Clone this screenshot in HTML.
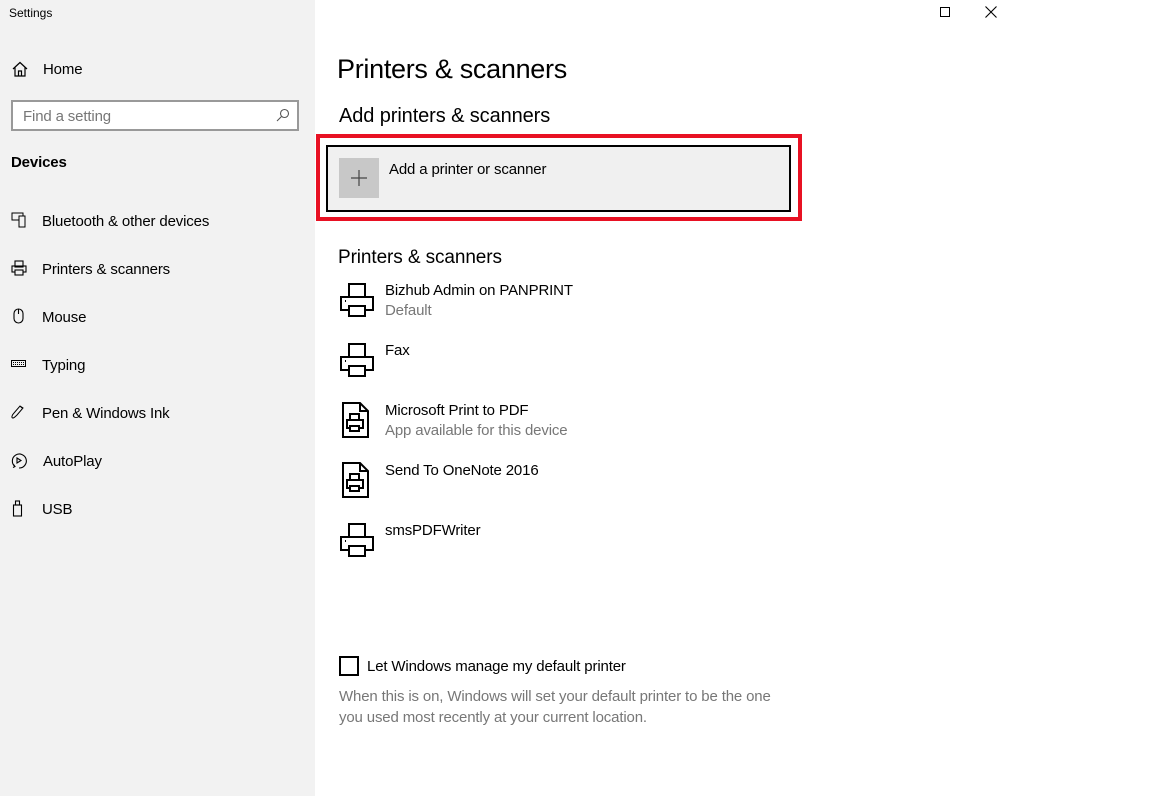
<!DOCTYPE html>
<html><head><meta charset="utf-8"><style>
*{margin:0;padding:0;box-sizing:border-box}
body{width:1152px;height:796px;background:#fff;font-family:"Liberation Sans",sans-serif;color:#000;position:relative;overflow:hidden}
.side{position:absolute;left:0;top:0;width:315px;height:796px;background:#f2f2f2}
.a{position:absolute;white-space:nowrap}
.s15{font-size:15px;letter-spacing:-0.15px}
.g{color:#777}
svg{position:absolute}
</style></head><body>
<div class="side"></div>
<div class="a" style="left:9px;top:6px;font-size:12px">Settings</div>
<svg style="left:12px;top:61px" width="16" height="16" viewBox="0 0 16 16" fill="none" stroke="#000" stroke-width="1.2"><path d="M1 8L8 1.5 15 8M3 6.5V15H13V6.5"/><path d="M6.5 15V10h3v5"/></svg>
<div class="a s15" style="left:43px;top:61px">Home</div>
<div class="a" style="left:11px;top:100px;width:288px;height:31px;border:2px solid #999;background:#fff"></div>
<div class="a s15 g" style="left:23px;top:108px">Find a setting</div>
<svg style="left:276px;top:108px" width="14" height="14" viewBox="0 0 14 14" fill="none" stroke="#555" stroke-width="1.1"><circle cx="8.5" cy="5.5" r="4"/><path d="M5.5 8.5L1 13"/></svg>
<div class="a s15" style="left:11px;top:154px;font-weight:bold">Devices</div>
<svg style="left:11px;top:212px" width="16" height="16" viewBox="0 0 16 16" fill="none" stroke="#000" stroke-width="1"><rect x="1" y="1" width="11" height="7"/><rect x="8" y="4" width="6" height="11" fill="#f2f2f2"/></svg>
<div class="a s15" style="left:42px;top:213px">Bluetooth &amp; other devices</div>
<svg style="left:11px;top:260px" width="16" height="16" viewBox="0 0 16 16" fill="none" stroke="#000" stroke-width="1.1"><rect x="4" y="1" width="8" height="6"/><rect x="1" y="6" width="14" height="6"/><rect x="4" y="10" width="8" height="5" fill="#f2f2f2"/></svg>
<div class="a s15" style="left:42px;top:261px">Printers &amp; scanners</div>
<svg style="left:11px;top:308px" width="16" height="16" viewBox="0 0 16 16" fill="none" stroke="#000" stroke-width="1.1"><rect x="3" y="1" width="9" height="14" rx="4.5"/><path d="M7.5 1v5"/></svg>
<div class="a s15" style="left:42px;top:309px">Mouse</div>
<svg style="left:11px;top:356px" width="16" height="16" viewBox="0 0 16 16" fill="none" stroke="#000" stroke-width="1"><rect x="0.5" y="4.5" width="14" height="6"/><path d="M2 6.5h11M2 8.5h11" stroke-dasharray="1 1"/></svg>
<div class="a s15" style="left:42px;top:357px">Typing</div>
<svg style="left:10px;top:404px" width="18" height="16" viewBox="0 0 18 16" fill="none" stroke="#000" stroke-width="1"><path d="M3 14c-2 0-1-3 1-5l6-7 3 2-6 7c-1 1-3 3-4 3zM10 2l2 2"/></svg>
<div class="a s15" style="left:42px;top:405px">Pen &amp; Windows Ink</div>
<svg style="left:10px;top:452px" width="18" height="18" viewBox="0 0 18 18" fill="none" stroke="#000" stroke-width="1.1"><path d="M5 14.5A7 7 0 1 1 9 16"/><path d="M7 6l4 2.5-4 2.5z"/><path d="M3.5 12.5l1.5 2-2 1"/></svg>
<div class="a s15" style="left:43px;top:453px">AutoPlay</div>
<svg style="left:12px;top:500px" width="12" height="17" viewBox="0 0 12 17" fill="none" stroke="#000" stroke-width="1.1"><rect x="1.5" y="5" width="8" height="11"/><rect x="3.5" y="1" width="4" height="4"/></svg>
<div class="a s15" style="left:42px;top:501px">USB</div>

<div class="a" style="left:940px;top:7px;width:10px;height:10px;border:1px solid #000"></div>
<svg style="left:985px;top:6px" width="12" height="12" viewBox="0 0 12 12" stroke="#000" stroke-width="1.1"><path d="M0.5 0.5l11 11M11.5 0.5l-11 11"/></svg>

<div class="a" style="left:337px;top:54px;font-size:27px;letter-spacing:-0.3px">Printers &amp; scanners</div>
<div class="a" style="left:339px;top:105px;font-size:20px;letter-spacing:-0.1px">Add printers &amp; scanners</div>
<div class="a" style="left:316px;top:134px;width:486px;height:87px;border:4px solid #e81123"></div>
<div class="a" style="left:326px;top:145px;width:465px;height:67px;border:2px solid #000;background:#f0f0f0"></div>
<div class="a" style="left:339px;top:158px;width:40px;height:40px;background:#c8c8c8"></div>
<svg style="left:350px;top:169px" width="18" height="18" viewBox="0 0 18 18" stroke="#444" stroke-width="1.2"><path d="M9 1v16M1 9h16"/></svg>
<div class="a s15" style="left:389px;top:161px">Add a printer or scanner</div>
<div class="a" style="left:338px;top:247px;font-size:19px;letter-spacing:-0.1px">Printers &amp; scanners</div>

<svg style="left:340px;top:282px" width="36" height="36" viewBox="0 0 36 36" fill="none" stroke="#000" stroke-width="2"><rect x="9" y="2" width="16" height="14"/><rect x="1" y="15" width="32" height="13" fill="#fff"/><rect x="9" y="24" width="16" height="10" fill="#fff"/><path d="M5 19h1"/></svg>
<div class="a s15" style="left:385px;top:282px">Bizhub Admin on PANPRINT</div>
<div class="a s15 g" style="left:385px;top:302px">Default</div>
<svg style="left:340px;top:342px" width="36" height="36" viewBox="0 0 36 36" fill="none" stroke="#000" stroke-width="2"><rect x="9" y="2" width="16" height="14"/><rect x="1" y="15" width="32" height="13" fill="#fff"/><rect x="9" y="24" width="16" height="10" fill="#fff"/><path d="M5 19h1"/></svg>
<div class="a s15" style="left:385px;top:342px">Fax</div>
<svg style="left:342px;top:402px" width="30" height="36" viewBox="0 0 30 36" fill="none" stroke="#000" stroke-width="2"><path d="M1 1h17l8 8v26H1z"/><path d="M18 1v8h8"/><rect x="8" y="12" width="9" height="8"/><rect x="5" y="18" width="16" height="8" fill="#fff"/><rect x="8" y="24" width="9" height="5" fill="#fff"/></svg>
<div class="a s15" style="left:385px;top:402px">Microsoft Print to PDF</div>
<div class="a s15 g" style="left:385px;top:422px">App available for this device</div>
<svg style="left:342px;top:462px" width="30" height="36" viewBox="0 0 30 36" fill="none" stroke="#000" stroke-width="2"><path d="M1 1h17l8 8v26H1z"/><path d="M18 1v8h8"/><rect x="8" y="12" width="9" height="8"/><rect x="5" y="18" width="16" height="8" fill="#fff"/><rect x="8" y="24" width="9" height="5" fill="#fff"/></svg>
<div class="a s15" style="left:385px;top:462px">Send To OneNote 2016</div>
<svg style="left:340px;top:522px" width="36" height="36" viewBox="0 0 36 36" fill="none" stroke="#000" stroke-width="2"><rect x="9" y="2" width="16" height="14"/><rect x="1" y="15" width="32" height="13" fill="#fff"/><rect x="9" y="24" width="16" height="10" fill="#fff"/><path d="M5 19h1"/></svg>
<div class="a s15" style="left:385px;top:522px">smsPDFWriter</div>

<div class="a" style="left:339px;top:656px;width:20px;height:20px;border:2px solid #000"></div>
<div class="a s15" style="left:367px;top:658px">Let Windows manage my default printer</div>
<div class="a s15 g" style="left:339px;top:686px;line-height:21px;white-space:normal;width:455px">When this is on, Windows will set your default printer to be the one you used most recently at your current location.</div>
</body></html>
